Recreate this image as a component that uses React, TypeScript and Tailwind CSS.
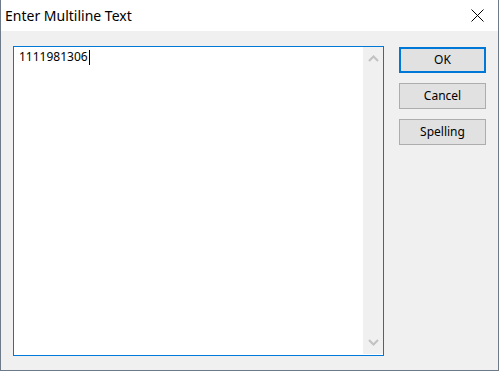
import React from "react";

const font = { fontFamily: '"Segoe UI", "Noto Sans", "Liberation Sans", sans-serif' };

function Chevron({ up }: { up?: boolean }) {
  return (
    <svg width="11" height="7" viewBox="0 0 11 7" className="block">
      <polyline
        points={up ? "1,6 5.5,1.5 10,6" : "1,1 5.5,5.5 10,1"}
        fill="none"
        stroke="#c2c2c2"
        strokeWidth="2"
      />
    </svg>
  );
}

function Btn({ label, primary }: { label: string; primary?: boolean }) {
  return (
    <div
      className={
        "w-[87px] h-[26px] flex items-center justify-center bg-[#e1e1e1] text-[12px] text-black " +
        (primary ? "border-2 border-[#0078d7]" : "border border-[#adadad]")
      }
    >
      {label}
    </div>
  );
}

export default function App() {
  return (
    <div style={font} className="w-[499px] h-[371px] flex flex-col border-x border-b border-[#6e7a88] bg-[#f0f0f0] overflow-hidden">
      <div className="h-[31px] bg-white flex items-center justify-between shrink-0">
        <span className="pl-[4px] text-[14px] text-black leading-none pt-[1px]">Enter Multiline Text</span>
        <svg width="13" height="13" viewBox="0 0 13 13" className="mr-[14px]">
          <line x1="0.5" y1="0.5" x2="12.5" y2="12.5" stroke="#000" strokeWidth="1" />
          <line x1="12.5" y1="0.5" x2="0.5" y2="12.5" stroke="#000" strokeWidth="1" />
        </svg>
      </div>
      <div className="flex pl-[12px] pt-[15px] gap-[15px]">
        <div className="w-[371px] h-[310px] border border-[#0078d7] bg-white flex">
          <div className="flex-1 pl-[5px] pt-[2px] text-[12px] text-black leading-[16px] flex items-start">
            <span>1111981306</span>
            <span className="inline-block w-px h-[15px] bg-black ml-[1px] mt-[1px]" />
          </div>
          <div className="w-[20px] bg-[#f0f0f0] mb-[1px] flex flex-col items-center justify-between py-[8px]">
            <Chevron up />
            <Chevron />
          </div>
        </div>
        <div className="flex flex-col gap-[10px] pt-[1px]">
          <Btn label="OK" primary />
          <Btn label="Cancel" />
          <Btn label="Spelling" />
        </div>
      </div>
    </div>
  );
}
